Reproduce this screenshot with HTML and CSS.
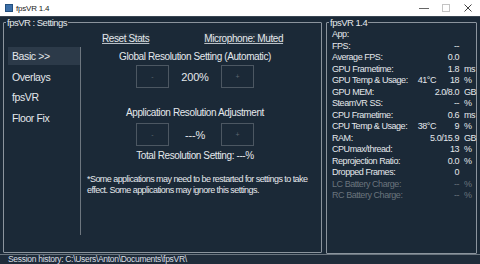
FILE: index.html
```html
<!DOCTYPE html>
<html lang="en">
<head>
    <meta charset="UTF-8">
    <meta name="viewport" content="width=device-width, initial-scale=1.0">
    <title>fpsVR 1.4</title>
    <link rel="stylesheet" href="styles.css">
</head>
<body>

    <div class="titlebar">
        <span class="app-icon"></span>
        <span class="app-title">fpsVR 1.4</span>
        <span class="controls">
            <svg width="10" height="10" viewBox="0 0 10 10"><path d="M0 5.5h10" stroke="#666" stroke-width="1"/></svg>
            <svg width="10" height="10" viewBox="0 0 10 10"><rect x="1.5" y="1.5" width="7" height="7" fill="none" stroke="#c4c4c4"/></svg>
            <svg width="10" height="10" viewBox="0 0 10 10"><path d="M1.5 1.5l7 7M8.5 1.5l-7 7" stroke="#444" stroke-width="1"/></svg>
        </span>
    </div>

    <div class="main">
        <fieldset class="group settings">
            <legend>fpsVR : Settings</legend>
            <div class="settings-body">
                <ul class="nav">
                    <li class="active">Basic &gt;&gt;</li>
                    <li>Overlays</li>
                    <li>fpsVR</li>
                    <li>Floor Fix</li>
                </ul>
                <div class="content">
                    <div class="links">
                        <span class="link">Reset Stats</span>
                        <span class="link">Microphone: Muted</span>
                    </div>

                    <div class="caption first">Global Resolution Setting (Automatic)</div>
                    <div class="stepper">
                        <button class="btn">-</button>
                        <span class="value">200%</span>
                        <button class="btn">+</button>
                    </div>

                    <div class="caption second">Application Resolution Adjustment</div>
                    <div class="stepper">
                        <button class="btn">-</button>
                        <span class="value">---%</span>
                        <button class="btn">+</button>
                    </div>

                    <div class="caption total">Total Resolution Setting: ---%</div>

                    <p class="note">*Some applications may need to be restarted for settings to take<br>effect. Some applications may ignore this settings.</p>
                </div>
            </div>
        </fieldset>

        <fieldset class="group stats">
            <legend>fpsVR 1.4</legend>
            <table class="stats-table">
                <colgroup>
                    <col class="c-label"><col class="c-temp"><col class="c-num"><col class="c-unit">
                </colgroup>
                <tr><td>App:</td><td colspan="2"></td><td></td></tr>
                <tr><td>FPS:</td><td class="num" colspan="2">--</td><td></td></tr>
                <tr><td>Average FPS:</td><td class="num" colspan="2">0.0</td><td></td></tr>
                <tr><td>GPU Frametime:</td><td class="num" colspan="2">1.8</td><td>ms</td></tr>
                <tr><td>GPU Temp &amp; Usage:</td><td class="num">41°C</td><td class="num">18</td><td>%</td></tr>
                <tr><td>GPU MEM:</td><td class="num" colspan="2">2.0/8.0</td><td>GB</td></tr>
                <tr><td>SteamVR SS:</td><td class="num" colspan="2">--</td><td>%</td></tr>
                <tr><td>CPU Frametime:</td><td class="num" colspan="2">0.6</td><td>ms</td></tr>
                <tr><td>CPU Temp &amp; Usage:</td><td class="num">38°C</td><td class="num">9</td><td>%</td></tr>
                <tr><td>RAM:</td><td class="num" colspan="2">5.0/15.9</td><td>GB</td></tr>
                <tr><td>CPUmax/thread:</td><td class="num" colspan="2">13</td><td>%</td></tr>
                <tr><td>Reprojection Ratio:</td><td class="num" colspan="2">0.0</td><td>%</td></tr>
                <tr><td>Dropped Frames:</td><td class="num" colspan="2">0</td><td></td></tr>
                <tr class="dim"><td>LC Battery Charge:</td><td class="num" colspan="2">--</td><td>%</td></tr>
                <tr class="dim"><td>RC Battery Charge:</td><td class="num" colspan="2">--</td><td>%</td></tr>
            </table>
        </fieldset>
    </div>

    <div class="statusbar">Session history: C:\Users\Anton\Documents\fpsVR\</div>

</body>
</html>
```

FILE: styles.css
```css
body {
    margin: 0;
    width: 480px;
    height: 264px;
    overflow: hidden;
    background-color: #1b2937;
    color: #e4e8ec;
    font-family: 'Liberation Sans', Arial, sans-serif;
    font-size: 10px;
    letter-spacing: -0.4px;
}

.titlebar {
    height: 17px;
    background-color: #fff;
    color: #222;
    display: flex;
    align-items: center;
    padding-left: 5px;
    border-bottom: 1px solid #3a4652;
    box-sizing: border-box;
    font-size: 8px;
    letter-spacing: -0.2px;
}

.app-icon {
    width: 8px;
    height: 8px;
    background-color: #3c6fa8;
    border: 1px solid #24507e;
    box-sizing: border-box;
    margin-right: 3px;
}

.controls {
    margin-left: auto;
    display: flex;
    gap: 12px;
    padding-right: 7px;
}

.main {
    display: flex;
    gap: 4px;
    padding: 0 3px;
    height: 237px;
}

.group {
    margin: 0;
    padding: 0;
    min-width: 0;
    flex-shrink: 0;
    border: 1px solid #8b949d;
    border-radius: 1px;
    box-sizing: border-box;
}

.group legend {
    padding: 0 1px;
    margin-left: 2px;
    font-size: 9.5px;
    line-height: 11px;
    letter-spacing: -0.5px;
}

.settings {
    width: 319px;
    height: 236px;
}

.stats {
    width: 151px;
    height: 237px;
}

.settings-body {
    display: flex;
    height: 100%;
}

.nav {
    list-style: none;
    margin: 19px 0 0 4px;
    padding: 0;
    width: 72px;
    height: 188px;
    border-right: 1px solid #6d767f;
    flex-shrink: 0;
}

.nav li {
    height: 18px;
    line-height: 18px;
    padding-left: 4px;
    margin-bottom: 2.5px;
    font-size: 10.5px;
}

.nav li.active {
    background-color: #2c3a49;
}

.content {
    flex: 1;
    min-width: 0;
    padding: 0 18px 0 6px;
}

.links {
    display: flex;
    gap: 55px;
    padding-left: 15px;
    margin-top: 5px;
}

.link {
    text-decoration: underline;
    text-decoration-color: #b9c0c7;
    background-color: #253340;
}

.caption {
    text-align: center;
}

.caption.first {
    margin-top: 7px;
}

.caption.second {
    margin-top: 19px;
}

.caption.total {
    margin-top: 4px;
}

.stepper {
    display: flex;
    justify-content: center;
    align-items: center;
    margin-top: 3px;
}

.caption.second + .stepper {
    margin-top: 5px;
}

.btn {
    width: 33px;
    height: 23px;
    background-color: #1b2937;
    border: 1px solid #4c5762;
    color: #5e6872;
    font-size: 7px;
    padding: 0;
    font-family: inherit;
}

.value {
    width: 52px;
    text-align: center;
    font-size: 11px;
    letter-spacing: -0.2px;
}

.note {
    margin: 13px 0 0 0;
    font-size: 9px;
    line-height: 11px;
    letter-spacing: -0.55px;
    white-space: nowrap;
}

.stats-table {
    border-collapse: collapse;
    table-layout: fixed;
    width: 142px;
    margin: 1px 0 0 5px;
    font-size: 9px;
    letter-spacing: -0.45px;
}

.c-label { width: 84px; }
.c-temp { width: 20px; }
.c-num { width: 23px; }
.c-unit { width: 15px; }

.stats-table td {
    padding: 0;
    height: 11.5px;
    line-height: 11px;
    white-space: nowrap;
}

.stats-table td.num {
    text-align: right;
}

.stats-table td:last-child {
    padding-left: 5px;
}

.stats-table tr.dim {
    color: #6a747d;
}

.statusbar {
    height: 9px;
    border-top: 1px solid #6b757f;
    background-color: #1f2c3a;
    font-size: 8.5px;
    line-height: 9px;
    padding-left: 8px;
    letter-spacing: -0.3px;
    color: #d8dde2;
}
```
